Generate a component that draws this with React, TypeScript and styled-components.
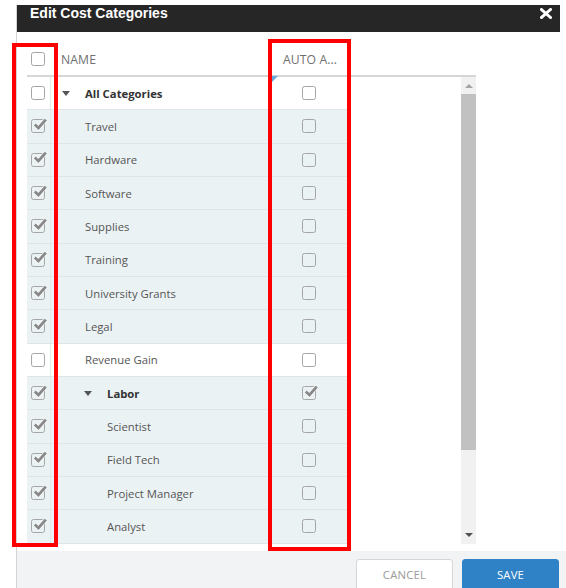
import React from "react";
import styled, { createGlobalStyle } from "styled-components";

const Global = createGlobalStyle`
  html, body { margin: 0; padding: 0; background: #ffffff; overflow: hidden; }
  body { font-family: "Open Sans", "Noto Sans", Arial, sans-serif; }
  * { box-sizing: border-box; }
`;

type Row = {
  name: string;
  level: number;
  bold?: boolean;
  caret?: boolean;
  checked: boolean;
  auto: boolean;
};

const rows: Row[] = [
  { name: "All Categories", level: 0, bold: true, caret: true, checked: false, auto: false },
  { name: "Travel", level: 0, checked: true, auto: false },
  { name: "Hardware", level: 0, checked: true, auto: false },
  { name: "Software", level: 0, checked: true, auto: false },
  { name: "Supplies", level: 0, checked: true, auto: false },
  { name: "Training", level: 0, checked: true, auto: false },
  { name: "University Grants", level: 0, checked: true, auto: false },
  { name: "Legal", level: 0, checked: true, auto: false },
  { name: "Revenue Gain", level: 0, checked: false, auto: false },
  { name: "Labor", level: 1, bold: true, caret: true, checked: true, auto: true },
  { name: "Scientist", level: 1, checked: true, auto: false },
  { name: "Field Tech", level: 1, checked: true, auto: false },
  { name: "Project Manager", level: 1, checked: true, auto: false },
  { name: "Analyst", level: 1, checked: true, auto: false },
];

const Page = styled.div`
  position: relative;
  width: 566px;
  height: 588px;
  overflow: hidden;
  padding: 5px 0 0 16px;
`;

const Dialog = styled.div`
  display: flex;
  flex-direction: column;
  height: 100%;
  border-left: 1px solid #d3d3d3;
`;

const TitleBar = styled.div`
  height: 27px;
  margin-right: 6px;
  background: #262626;
  display: flex;
  align-items: flex-start;
  justify-content: space-between;
  padding: 0 8px 0 13px;
  flex: none;
`;

const Title = styled.div`
  font-family: "Liberation Sans", Arial, sans-serif;
  font-weight: bold;
  font-size: 14px;
  line-height: 17px;
  color: #ffffff;
`;

const CloseIcon = styled.svg`
  margin-top: 3px;
  width: 12px;
  height: 11px;
`;

const Body = styled.div`
  padding: 11px 0 0 10px;
  flex: none;
`;

const Grid = styled.div`
  width: 449px;
`;

const Columns = styled.div`
  display: grid;
  grid-template-columns: 24px 221px 75px;
`;

const HeaderRow = styled(Columns)`
  height: 34px;
  border-bottom: 2px solid #d6d6d6;
  width: 449px;
`;

const HeaderCell = styled.div<{ $pad: number }>`
  display: flex;
  align-items: center;
  padding-left: ${(p) => p.$pad}px;
  font-size: 12.2px;
  color: #6f6f6f;
  letter-spacing: 0.1px;
`;

const Content = styled.div`
  display: flex;
  height: 466.67px;
`;

const RowList = styled.div`
  width: 320px;
  flex: none;
`;

const GridRow = styled(Columns)<{ $plain: boolean }>`
  height: 33.333px;
  background: ${(p) => (p.$plain ? "#ffffff" : "#ebf2f4")};
  border-bottom: 1px solid #dfe5e8;
`;

const CheckCell = styled.div`
  display: flex;
  align-items: center;
  padding-left: 4px;
  border-right: 1px solid #e2e7ea;
`;

const NameCell = styled.div<{ $level: number; $bold?: boolean }>`
  display: flex;
  align-items: center;
  padding-left: ${(p) => 11 + p.$level * 22}px;
  font-size: 11.3px;
  color: ${(p) => (p.$bold ? "#333333" : "#555555")};
  font-weight: ${(p) => (p.$bold ? 700 : 400)};
  white-space: nowrap;
`;

const CaretSlot = styled.span`
  width: 23px;
  flex: none;
  display: flex;
  align-items: center;
`;

const Caret = styled.span`
  width: 0;
  height: 0;
  border-left: 4.5px solid transparent;
  border-right: 4.5px solid transparent;
  border-top: 5px solid #555555;
`;

const AutoCell = styled.div`
  position: relative;
  display: flex;
  align-items: center;
  justify-content: center;
  padding-right: 1px;
`;

const DirtyMark = styled.span`
  position: absolute;
  top: -1px;
  left: 0;
  width: 0;
  height: 0;
  border-top: 6px solid #6aa7dd;
  border-right: 6px solid transparent;
`;

const Box = styled.span`
  position: relative;
  display: inline-block;
  width: 14px;
  height: 14px;
  border: 1.5px solid #a6a6a6;
  border-radius: 2.5px;
  background: transparent;
  flex: none;
`;

const Tick = styled.svg`
  position: absolute;
  left: 0.5px;
  top: -3.5px;
  width: 14px;
  height: 14px;
  overflow: visible;
`;

const Spacer = styled.div`
  flex: 1;
`;

const Scrollbar = styled.div`
  width: 15px;
  flex: none;
  background: #f1f1f1;
  display: flex;
  flex-direction: column;
  align-items: center;
`;

const ArrowUp = styled.span`
  margin-top: 7px;
  width: 0;
  height: 0;
  border-left: 4px solid transparent;
  border-right: 4px solid transparent;
  border-bottom: 4px solid #a3a3a3;
`;

const Thumb = styled.div`
  margin-top: 6px;
  width: 15px;
  height: 356px;
  background: #c1c1c1;
`;

const ArrowDown = styled.span`
  margin-top: auto;
  margin-bottom: 7px;
  width: 0;
  height: 0;
  border-left: 4px solid transparent;
  border-right: 4px solid transparent;
  border-top: 4px solid #505050;
`;

const Footer = styled.div`
  margin-top: 7px;
  flex: 1;
  background: #f2f3f5;
  display: flex;
  justify-content: flex-end;
  align-items: flex-start;
  gap: 9px;
  padding: 8px 7px 0 0;
`;

const Button = styled.button<{ $primary?: boolean }>`
  width: 97px;
  height: 32px;
  border-radius: 3px;
  font-family: "Open Sans", Arial, sans-serif;
  font-size: 11.3px;
  letter-spacing: 0.2px;
  cursor: pointer;
  border: 1px solid ${(p) => (p.$primary ? "#2f82c6" : "#d6d6d6")};
  background: ${(p) => (p.$primary ? "#2f82c6" : "#ffffff")};
  color: ${(p) => (p.$primary ? "#ffffff" : "#9a9a9a")};
  padding: 0;
`;

const Highlight = styled.div<{ $l: number; $t: number; $w: number; $h: number }>`
  position: absolute;
  left: ${(p) => p.$l}px;
  top: ${(p) => p.$t}px;
  width: ${(p) => p.$w}px;
  height: ${(p) => p.$h}px;
  border: 4px solid #ff0000;
  pointer-events: none;
`;

function CheckBox({ checked }: { checked: boolean }) {
  return (
    <Box>
      {checked && (
        <Tick viewBox="0 0 14 14">
          <path d="M1.8 7.6 L5.4 11 L12.8 2.6" fill="none" stroke="#ffffff" strokeWidth="4.4" opacity="0.6" />
          <path d="M1.8 7.6 L5.4 11 L12.8 2.6" fill="none" stroke="#888888" strokeWidth="2.8" strokeLinejoin="miter" />
        </Tick>
      )}
    </Box>
  );
}

export default function App() {
  return (
    <>
      <Global />
      <Page>
        <Dialog>
          <TitleBar>
            <Title>Edit Cost Categories</Title>
            <CloseIcon viewBox="0 0 12 11">
              <path d="M1.5 1.5 L10.5 9.5 M10.5 1.5 L1.5 9.5" stroke="#ffffff" strokeWidth="3" strokeLinecap="square" />
            </CloseIcon>
          </TitleBar>
          <Body>
            <Grid>
              <HeaderRow>
                <HeaderCell $pad={4}>
                  <CheckBox checked={false} />
                </HeaderCell>
                <HeaderCell $pad={10}>NAME</HeaderCell>
                <HeaderCell $pad={11}>AUTO A...</HeaderCell>
              </HeaderRow>
              <Content>
                <RowList>
                  {rows.map((r, i) => (
                    <GridRow key={r.name} $plain={!r.checked}>
                      <CheckCell>
                        <CheckBox checked={r.checked} />
                      </CheckCell>
                      <NameCell $level={r.level} $bold={r.bold}>
                        <CaretSlot>{r.caret && <Caret />}</CaretSlot>
                        {r.name}
                      </NameCell>
                      <AutoCell>
                        {i === 0 && <DirtyMark />}
                        <CheckBox checked={r.auto} />
                      </AutoCell>
                    </GridRow>
                  ))}
                </RowList>
                <Spacer />
                <Scrollbar>
                  <ArrowUp />
                  <Thumb />
                  <ArrowDown />
                </Scrollbar>
              </Content>
            </Grid>
          </Body>
          <Footer>
            <Button>CANCEL</Button>
            <Button $primary>SAVE</Button>
          </Footer>
        </Dialog>
        <Highlight $l={12} $t={43} $w={46} $h={504} />
        <Highlight $l={268} $t={39} $w={83} $h={512} />
      </Page>
    </>
  );
}
